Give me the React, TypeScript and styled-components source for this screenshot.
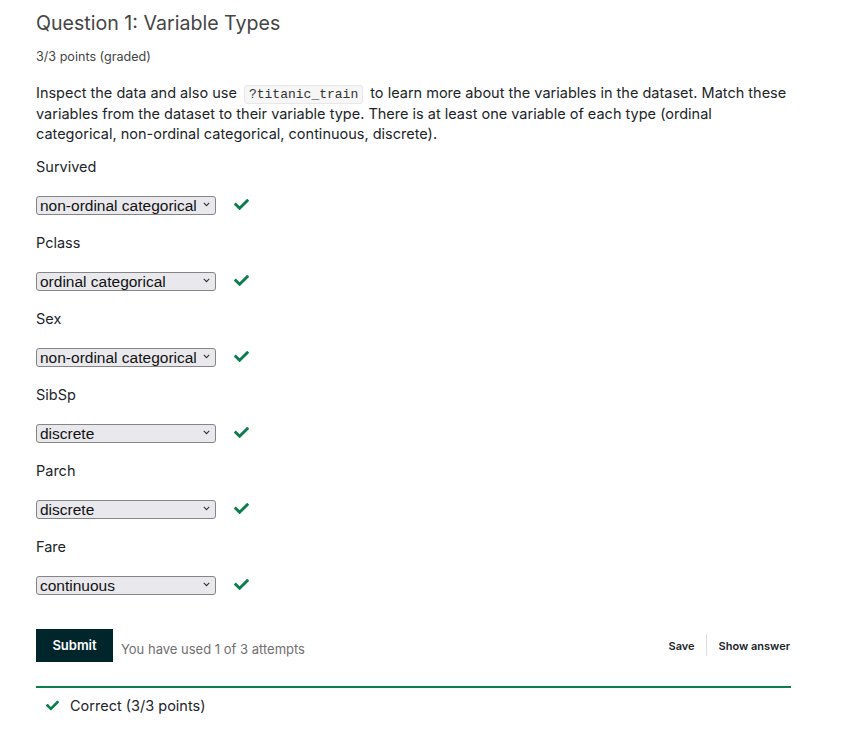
import React from "react";
import styled, { createGlobalStyle } from "styled-components";
import { FaCheck } from "react-icons/fa";

const Global = createGlobalStyle`
  html, body { margin: 0; padding: 0; background: #fff; }
  body { font-family: Inter, "Open Sans", sans-serif; color: #212529; }
`;

const Page = styled.div`
  padding: 10px 0 0 36px;
  width: 755px;
`;

const Title = styled.h3`
  margin: 0;
  font-size: 19.6px;
  font-weight: 400;
  line-height: 26px;
  color: #454545;
`;

const Points = styled.div`
  margin-top: 13px;
  font-size: 12.6px;
  line-height: 16px;
  color: #454545;
`;

const Prompt = styled.p`
  margin: 18px 0 0;
  font-size: 14.5px;
  line-height: 20.5px;
  color: #212529;
`;

const Code = styled.code`
  font-family: "Liberation Mono", "DejaVu Sans Mono", monospace;
  font-size: 13px;
  line-height: 1;
  background: #f6f6f6;
  border: 1px solid #e8e8e8;
  border-radius: 3px;
  padding: 1px 4px;
  margin: 0 3px;
  color: #333;
`;

const FieldList = styled.div`
  display: flex;
  flex-direction: column;
  gap: 19px;
  margin-top: 12px;
`;

const Field = styled.div`
  display: flex;
  flex-direction: column;
`;

const Label = styled.div`
  font-size: 14.5px;
  line-height: 20px;
  color: #212529;
`;

const Row = styled.div`
  display: flex;
  align-items: center;
  margin-top: 18px;
  gap: 18px;
`;

const SelectWrap = styled.div`
  position: relative;
  width: 180px;
  height: 19px;
`;

const Select = styled.select`
  appearance: none;
  -webkit-appearance: none;
  font-family: "Liberation Sans", Arial, sans-serif;
  font-size: 15.5px;
  line-height: 17px;
  width: 180px;
  height: 19px;
  padding: 0 16px 0 3px;
  margin: 0;
  background: #e9e9ed;
  border: 1px solid #858585;
  border-radius: 3px;
  color: #111;
  box-sizing: border-box;
`;

const Chevron = styled.svg`
  position: absolute;
  right: 6px;
  top: 7px;
  width: 7px;
  height: 5px;
  pointer-events: none;
`;

const Check = styled(FaCheck)`
  color: #0d7d4d;
  width: 15px;
  height: 15px;
`;

const Actions = styled.div`
  display: flex;
  align-items: center;
  margin-top: 35px;
`;

const Submit = styled.button`
  background: #00262b;
  color: #fff;
  border: none;
  font-family: Inter, sans-serif;
  font-weight: 600;
  font-size: 13px;
  width: 77px;
  height: 33px;
  padding: 0 0 1px;
`;

const Attempts = styled.span`
  font-size: 13px;
  color: #707070;
  margin: 8px 0 0 8px;
`;

const Spacer = styled.div`
  flex: 1;
`;

const LinkBtn = styled.span<{ $last?: boolean }>`
  font-size: 11px;
  font-weight: 600;
  color: #212529;
  padding: 2px ${(p) => (p.$last ? "1px" : "11px")} 0 12px;
  line-height: 22px;
`;

const Divider = styled.div`
  width: 1px;
  height: 22px;
  background: #dcdcdc;
`;

const Result = styled.div`
  margin-top: 24px;
  border-top: 2px solid #0d7d4d;
  display: flex;
  align-items: center;
  gap: 11px;
  padding: 9px 0 0 10px;
  font-size: 14.5px;
  color: #212529;
`;

const SmallCheck = styled(FaCheck)`
  color: #0d7d4d;
  width: 13px;
  height: 13px;
`;

const options = [
  "",
  "ordinal categorical",
  "non-ordinal categorical",
  "continuous",
  "discrete",
];

const fields: [string, string][] = [
  ["Survived", "non-ordinal categorical"],
  ["Pclass", "ordinal categorical"],
  ["Sex", "non-ordinal categorical"],
  ["SibSp", "discrete"],
  ["Parch", "discrete"],
  ["Fare", "continuous"],
];

export default function App() {
  return (
    <>
      <Global />
      <Page>
        <Title>Question 1: Variable Types</Title>
        <Points>3/3 points (graded)</Points>
        <Prompt>
          Inspect the data and also use <Code>?titanic_train</Code> to learn more
          about the variables in the dataset. Match these variables from the
          dataset to their variable type. There is at least one variable of each
          type (ordinal categorical, non-ordinal categorical, continuous,
          discrete).
        </Prompt>
        <FieldList>
          {fields.map(([name, value]) => (
            <Field key={name}>
              <Label>{name}</Label>
              <Row>
                <SelectWrap>
                  <Select defaultValue={value}>
                    {options.map((o) => (
                      <option key={o} value={o}>
                        {o}
                      </option>
                    ))}
                  </Select>
                  <Chevron viewBox="0 0 7 5">
                    <path
                      d="M0.8 0.8 L3.5 3.6 L6.2 0.8"
                      fill="none"
                      stroke="#333"
                      strokeWidth="1.1"
                    />
                  </Chevron>
                </SelectWrap>
                <Check />
              </Row>
            </Field>
          ))}
        </FieldList>
        <Actions>
          <Submit>Submit</Submit>
          <Attempts>You have used 1 of 3 attempts</Attempts>
          <Spacer />
          <LinkBtn>Save</LinkBtn>
          <Divider />
          <LinkBtn $last>Show answer</LinkBtn>
        </Actions>
        <Result>
          <SmallCheck />
          Correct (3/3 points)
        </Result>
      </Page>
    </>
  );
}
